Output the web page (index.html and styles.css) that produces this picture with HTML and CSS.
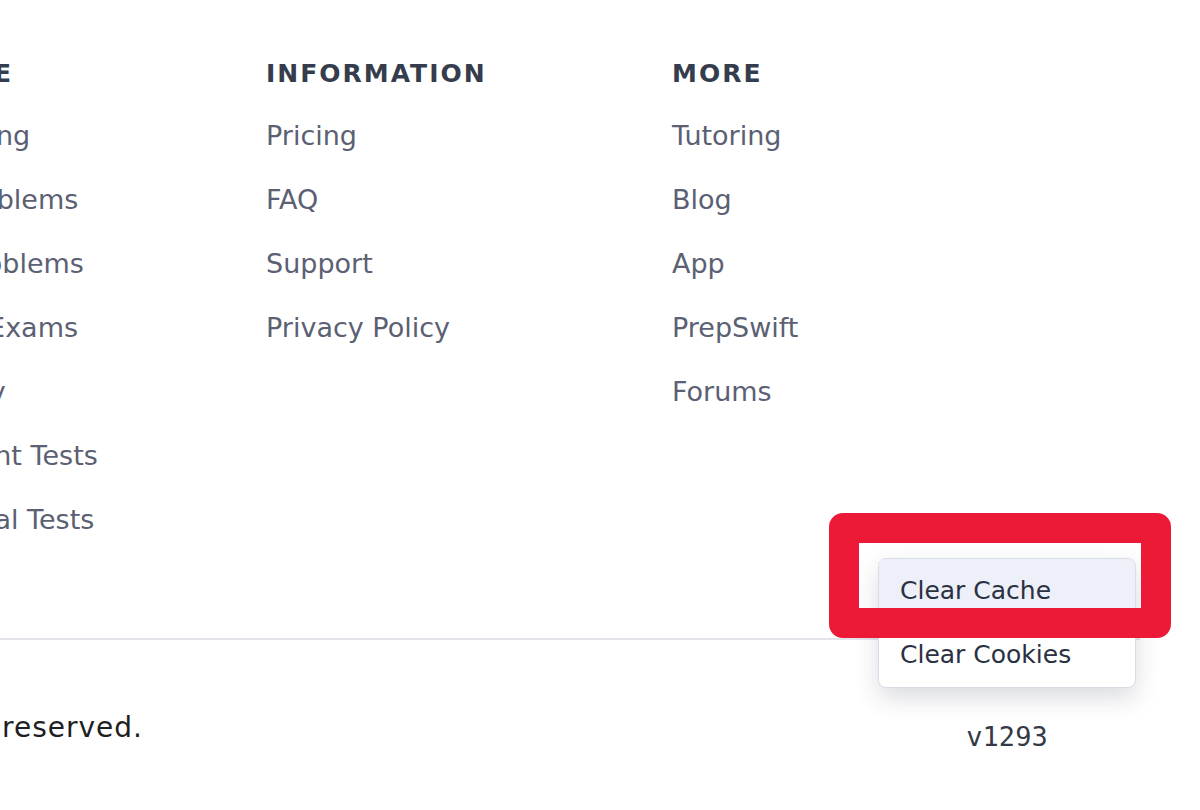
FILE: index.html
```html
<!DOCTYPE html>
<html>
<head>
    <title>Footer</title>
    <link rel="stylesheet" href="styles.css">
</head>
<body>
  <footer class="site-footer">
    <div class="footer-cols">
      <div class="footer-col">
        <h4>PRACTICE</h4>
        <ul>
          <li><a href="#">Live Training</a></li>
          <li><a href="#">Verbal Problems</a></li>
          <li><a href="#">Solved Problems</a></li>
          <li><a href="#">Adaptive Exams</a></li>
          <li><a href="#">Philosophy</a></li>
          <li><a href="#">Assessment Tests</a></li>
          <li><a href="#">Educational Tests</a></li>
        </ul>
      </div>
      <div class="footer-col">
        <h4>INFORMATION</h4>
        <ul>
          <li><a href="#">Pricing</a></li>
          <li><a href="#">FAQ</a></li>
          <li><a href="#">Support</a></li>
          <li><a href="#">Privacy Policy</a></li>
        </ul>
      </div>
      <div class="footer-col">
        <h4>MORE</h4>
        <ul>
          <li><a href="#">Tutoring</a></li>
          <li><a href="#">Blog</a></li>
          <li><a href="#">App</a></li>
          <li><a href="#">PrepSwift</a></li>
          <li><a href="#">Forums</a></li>
        </ul>
      </div>
    </div>

    <div class="footer-bottom">
      <div class="copyright">
        <p>Copyright &copy; 2024 Target Test Prep. All rights reserved.</p>
      </div>
      <div class="version-box">
        <!-- cache menu, opened from the version label -->
        <ul class="tools-menu">
          <li class="active">Clear Cache</li>
          <li>Clear Cookies</li>
          <span class="highlight-box"></span>
        </ul>
        <span class="version">v1293</span>
      </div>
    </div>
  </footer>
</body>
</html>
```

FILE: styles.css
```css
* {
    margin: 0;
    padding: 0;
    box-sizing: border-box;
}

body {
    font-family: "DejaVu Sans", Verdana, sans-serif;
    background-color: #fff;
    overflow: hidden;
}

.site-footer {
    width: 1200px;
    height: 810px;
}

.footer-cols {
    display: grid;
    grid-template-columns: repeat(3, 406px);
    margin-left: -140px;
    padding-top: 56px;
    height: 638px;
}

.footer-col h4 {
    font-size: 25px;
    line-height: 36px;
    font-weight: 700;
    letter-spacing: 2px;
    color: #353c4c;
    margin-bottom: 12px;
}

.footer-col ul {
    list-style: none;
}

.footer-col li {
    height: 64px;
    line-height: 64px;
    font-size: 27px;
    white-space: nowrap;
}

.footer-col li a {
    text-decoration: none;
    color: #5b6072;
}

.footer-bottom {
    display: flex;
    justify-content: space-between;
    border-top: 2px solid #e3e5ea;
    width: 1140px;
    padding-top: 68px;
}

.copyright {
    width: 143px;
    display: flex;
    justify-content: flex-end;
    white-space: nowrap;
}

.copyright p {
    font-size: 28px;
    line-height: 40px;
    letter-spacing: 1px;
    color: #1d1f24;
}

.version-box {
    position: relative;
    width: 258px;
    margin-right: 4px;
    text-align: center;
}

.version {
    display: block;
    padding-top: 9px;
    font-family: "DejaVu Sans Mono", monospace;
    font-size: 27px;
    line-height: 40px;
    color: #343a48;
}

.tools-menu {
    position: absolute;
    left: 0;
    bottom: 69px;
    width: 258px;
    list-style: none;
    text-align: left;
    background-color: #fff;
    border: 1px solid #d8dce4;
    border-radius: 8px;
    box-shadow: 0 10px 24px rgba(30, 40, 60, 0.16);
}

.tools-menu li {
    height: 64px;
    line-height: 64px;
    padding-left: 21px;
    font-size: 25px;
    color: #2a3143;
}

.tools-menu li.active {
    background-color: #edf0f8;
    border-radius: 7px 7px 0 0;
}

.highlight-box {
    position: absolute;
    left: -50px;
    top: -46px;
    width: 342px;
    height: 125px;
    border: 30px solid #ec1a37;
    border-radius: 14px;
}
```
